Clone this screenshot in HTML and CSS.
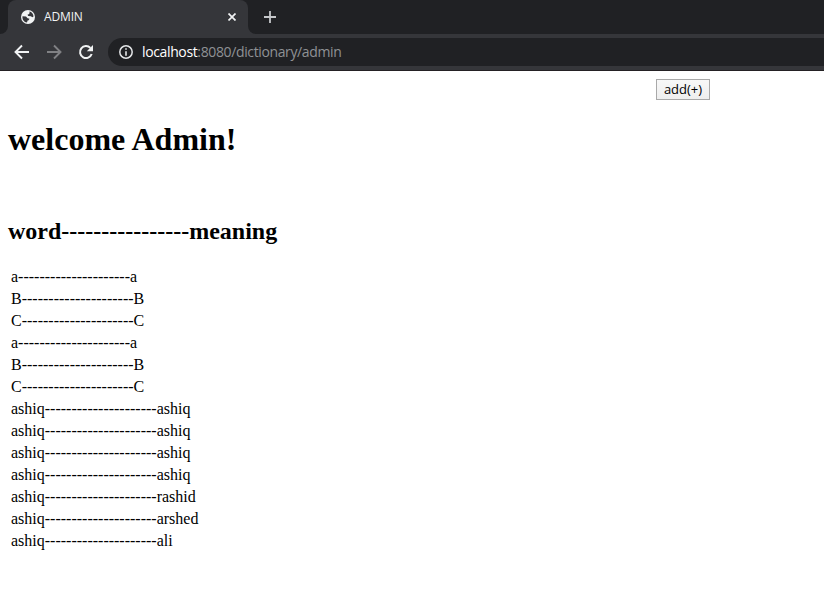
FILE: index.html
```html
<!DOCTYPE html>
<html lang="en">
<head>
<meta charset="utf-8">
<title>ADMIN</title>
<link rel="stylesheet" href="styles.css">
</head>
<body>
<header class="browser">
  <div class="tabstrip">
    <div class="strip-left"></div>
    <div class="tab">
      <svg class="globe" width="14" height="14" viewBox="0 0 14 14"><circle cx="7" cy="7" r="7" fill="#f1f3f4"/><path d="M1.5 6.2L5 6.4 6.6 8.3 8.5 8.7 7.7 10.2 6.6 10.6 6 12.5C3.2 12.3 1 9.500 1.500 6.200ZM8.300 1.600C10.800 2 12.500 4.200 12.500 6.500L11.300 7.200 9.900 6.200 7.200 6 6.500 4.700 8.100 4 8.600 2.800Z" fill="#35363a"/></svg>
      <span class="tab-title">ADMIN</span>
      <svg class="close" width="8" height="8" viewBox="0 0 8 8"><path d="M.5.5l7 7m0-7l-7 7" stroke="#f1f3f4" stroke-width="1.7"/></svg>
    </div>
    <div class="strip-right">
      <svg width="12" height="12" viewBox="0 0 12 12"><path d="M6 0v12M0 6h12" stroke="#c5c7ca" stroke-width="1.8"/></svg>
    </div>
  </div>
  <div class="toolbar">
    <svg class="nav" width="16" height="16" viewBox="0 0 16 16"><path d="M15 8H2M8 1.500L1.500 8 8 14.500" fill="none" stroke="#f1f3f4" stroke-width="1.900"/></svg>
    <svg class="nav" width="16" height="16" viewBox="0 0 16 16"><path d="M1 8h13M8 1.500L14.500 8 8 14.500" fill="none" stroke="#808184" stroke-width="1.900"/></svg>
    <svg class="nav" width="16" height="16" viewBox="0 0 16 16"><path d="M13.700 10A6 6 0 1 1 12.400 3.900" fill="none" stroke="#f1f3f4" stroke-width="2"/><path d="M15 1v6.200H8.800Z" fill="#f1f3f4"/></svg>
    <div class="omnibox">
      <svg width="14" height="14" viewBox="0 0 14 14"><circle cx="7" cy="7" r="6.200" fill="none" stroke="#e4e6e8" stroke-width="1.500"/><path d="M6.200 3.300h1.600v1.500H6.200zM6.200 6.200h1.600v4.500H6.200z" fill="#e4e6e8"/></svg>
      <span class="url"><span class="host">localhost</span><span class="path">:8080/dictionary/admin</span></span>
    </div>
  </div>
</header>
<main class="page">
  <div class="actions"><button class="add" type="button">add(+)</button></div>
  <h1>welcome Admin!</h1>
  <br>
  <h2>word----------------meaning</h2>
  <table>
    <tr><td>a---------------------a</td></tr>
    <tr><td>B---------------------B</td></tr>
    <tr><td>C---------------------C</td></tr>
    <tr><td>a---------------------a</td></tr>
    <tr><td>B---------------------B</td></tr>
    <tr><td>C---------------------C</td></tr>
    <tr><td>ashiq---------------------ashiq</td></tr>
    <tr><td>ashiq---------------------ashiq</td></tr>
    <tr><td>ashiq---------------------ashiq</td></tr>
    <tr><td>ashiq---------------------ashiq</td></tr>
    <tr><td>ashiq---------------------rashid</td></tr>
    <tr><td>ashiq---------------------arshed</td></tr>
    <tr><td>ashiq---------------------ali</td></tr>
  </table>
</main>
</body>
</html>
```
FILE: styles.css
```css
body {
  margin: 0;
  background: #fff;
  color: #000;
  font: 16px/18px "Liberation Serif", serif;
}
svg { display: block; flex: none; }
.browser {
  height: 71px;
  box-sizing: border-box;
  border-bottom: 1px solid #242124;
  background: #35363a;
  font-family: "Open Sans", sans-serif;
}
.tabstrip {
  display: flex;
  height: 34px;
  background: linear-gradient(#202124 50%, #35363a 50%);
}
.strip-left {
  width: 8px;
  background: #202124;
  border-bottom-right-radius: 8px;
}
.tab {
  display: flex;
  align-items: center;
  box-sizing: border-box;
  width: 240px;
  padding: 0 12px 0 13px;
  background: #35363a;
  border-radius: 8px 8px 0 0;
}
.tab-title {
  margin-left: 9px;
  color: #f1f3f4;
  font-size: 12px;
  letter-spacing: -0.15px;
}
.close { margin-left: auto; }
.strip-right {
  display: flex;
  align-items: center;
  flex: 1;
  padding-left: 16px;
  background: #202124;
  border-bottom-left-radius: 8px;
}
.toolbar {
  display: flex;
  align-items: center;
  height: 36px;
  padding-left: 14px;
}
.nav { margin-right: 16px; }
.omnibox {
  display: flex;
  align-items: center;
  flex: 1;
  height: 28px;
  margin-left: -2px;
  padding-left: 11px;
  border-radius: 14px 0 0 14px;
  background: #202124;
}
.url {
  margin-left: 9px;
  font-size: 14px;
  letter-spacing: -0.37px;
  white-space: nowrap;
}
.host { color: #fff; }
.path { color: #8f9195; }
.page { padding: 8px; }
.actions {
  display: flex;
  height: 21px;
  padding-left: 648px;
}
.add {
  width: 54px;
  height: 21px;
  padding: 0;
  border: 1px solid #a9a9a9;
  background: linear-gradient(#f8f8f8, #eee);
  color: #000;
  font: 13px/17px "Open Sans", sans-serif;
}
h1 {
  margin: 21.44px 0;
  font-size: 32px;
  line-height: 37px;
}
h2 {
  margin: 19.92px 0;
  font-size: 24px;
  line-height: 27px;
}
table { border-spacing: 2px; }
td { padding: 1px; }
```
